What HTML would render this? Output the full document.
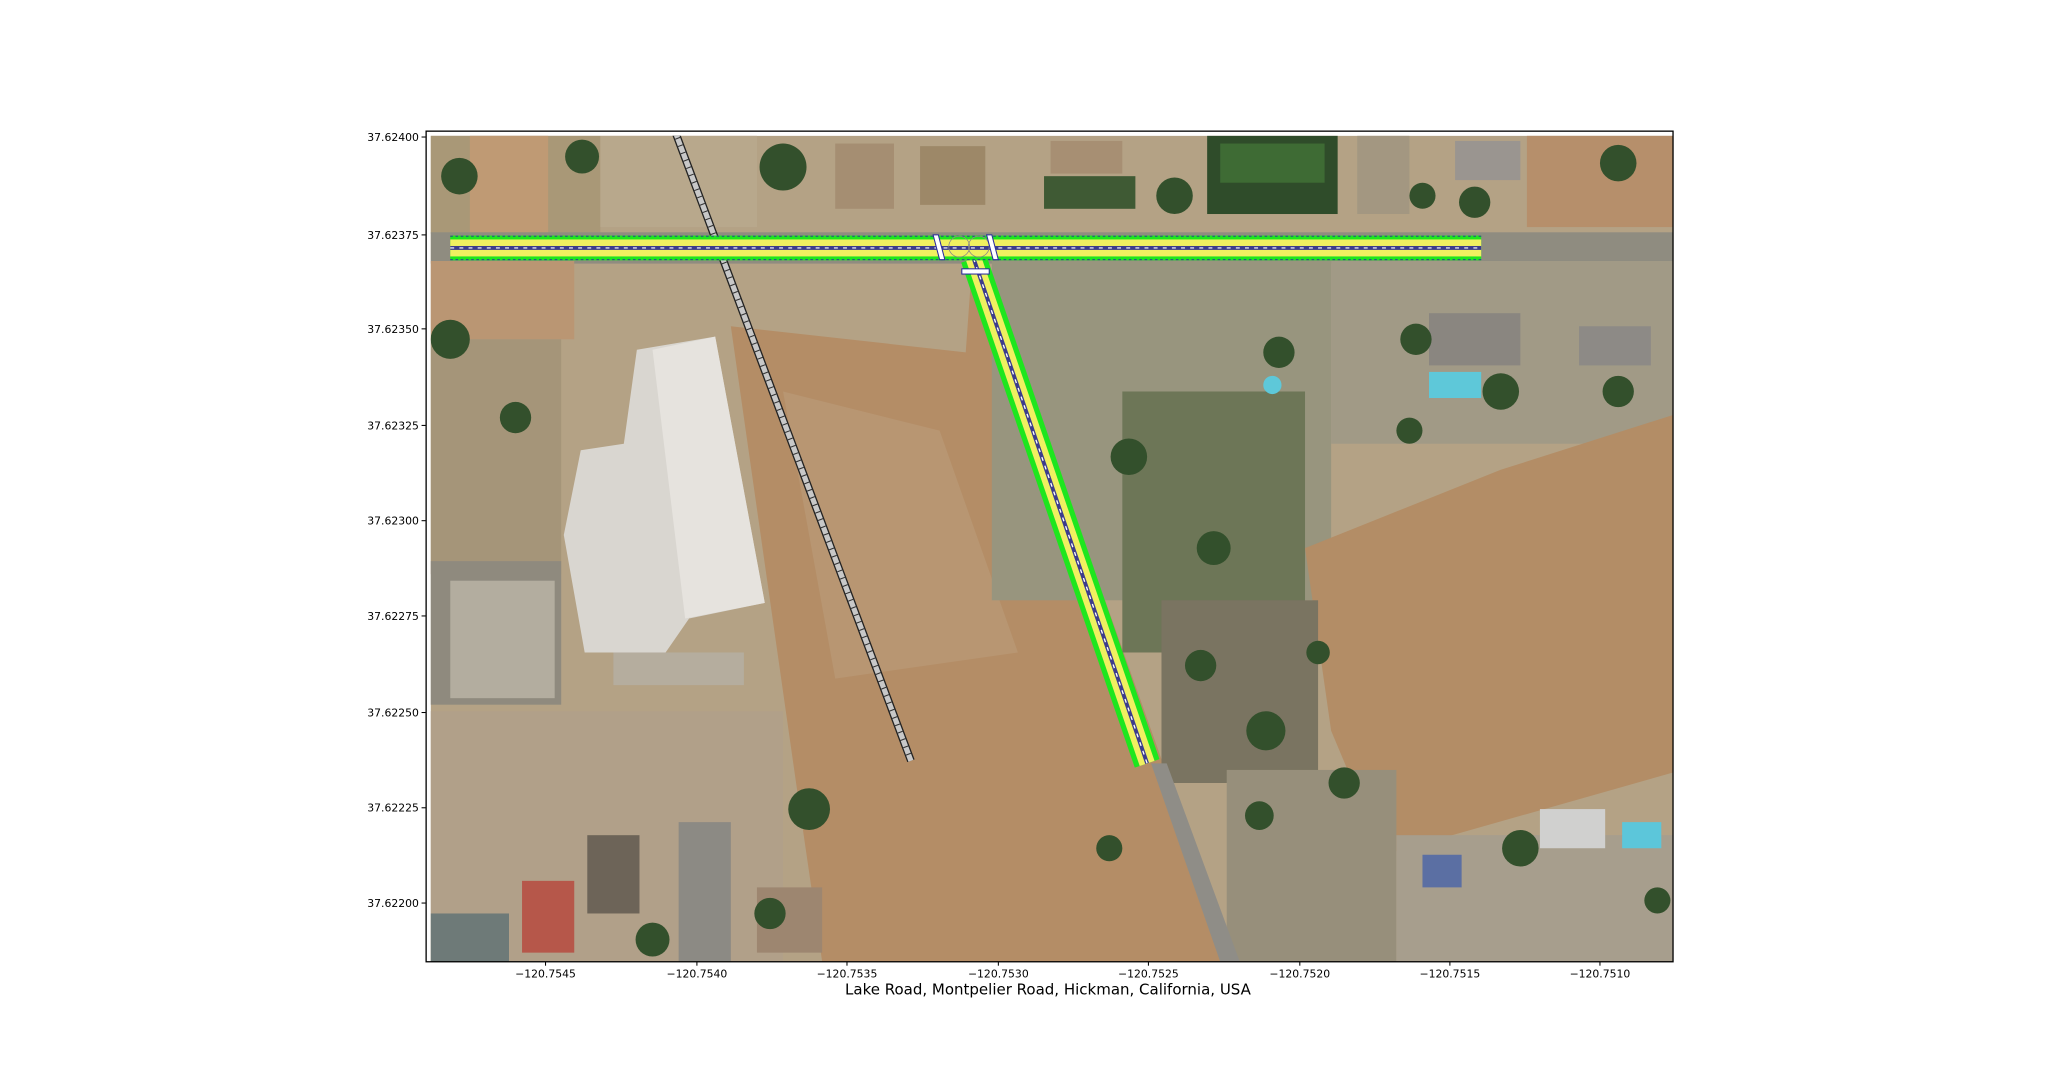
<!DOCTYPE html>
<html><head><meta charset="utf-8"><style>
html,body{margin:0;padding:0;background:#fff;}
svg{display:block;}
text{font-family:"DejaVu Sans","Liberation Sans",sans-serif;fill:#000;}
</style></head><body>
<svg width="2045" height="1080" viewBox="0 0 1567 827.6" xmlns="http://www.w3.org/2000/svg">
<defs>
<clipPath id="c"><rect x="330" y="104" width="952" height="633"/></clipPath>
<pattern id="rail" width="6" height="6" patternUnits="userSpaceOnUse"><rect width="6" height="6" fill="#bbb"/></pattern>
</defs>
<rect width="1567" height="828" fill="#fff"/>
<g clip-path="url(#c)">
<rect x="330" y="104" width="952" height="633" fill="#b4a285"/>
<!-- top-left area -->
<rect x="330" y="104" width="130" height="75" fill="#a99877"/>
<rect x="360" y="104" width="60" height="75" fill="#bf9a74"/>
<rect x="460" y="104" width="120" height="70" fill="#b8a88c"/>
<!-- road band -->
<rect x="330" y="178" width="952" height="24" fill="#8f8c80"/>
<!-- houses top -->
<rect x="640" y="110" width="45" height="50" fill="#a58e72"/>
<rect x="705" y="112" width="50" height="45" fill="#9d8868"/>
<rect x="805" y="108" width="55" height="25" fill="#a78f73"/>
<rect x="800" y="135" width="70" height="25" fill="#3f5a34"/>
<rect x="925" y="104" width="100" height="60" fill="#2f4c2a"/>
<rect x="935" y="110" width="80" height="30" fill="#3e6b34"/>
<rect x="1040" y="104" width="40" height="60" fill="#a39781"/>
<rect x="1115" y="108" width="50" height="30" fill="#9a9590"/>
<rect x="1170" y="104" width="112" height="70" fill="#b68f6b"/>
<!-- left-side lots -->
<rect x="330" y="200" width="110" height="60" fill="#ba9673"/>
<rect x="330" y="260" width="100" height="180" fill="#a59579"/>
<rect x="330" y="430" width="100" height="110" fill="#8f8a7e"/>
<rect x="345" y="445" width="80" height="90" fill="#b3ad9f"/>
<rect x="330" y="545" width="270" height="192" fill="#b1a089"/>
<!-- big white building -->
<polygon points="488,268 548,258 586,462 528,474 510,500 448,500 432,410 445,345 478,340" fill="#d9d6d0"/>
<polygon points="500,268 548,258 586,462 525,474" fill="#e6e3de"/>
<rect x="470" y="500" width="100" height="25" fill="#b5ad9e"/>
<!-- central field -->
<polygon points="560,250 740,270 745,200 745,200 760,215 945,737 630,737 610,600" fill="#b48d66"/>
<polygon points="600,300 720,330 780,500 640,520" fill="#b89672"/>
<!-- right area -->
<rect x="760" y="200" width="260" height="260" fill="#98957e"/>
<rect x="860" y="300" width="140" height="200" fill="#6d7657"/>
<rect x="1020" y="200" width="262" height="140" fill="#a19a86"/>
<rect x="1095" y="240" width="70" height="40" fill="#8a8680"/>
<rect x="1210" y="250" width="55" height="30" fill="#8d8a86"/>
<rect x="1095" y="285" width="40" height="20" fill="#5ec8d9"/>
<polygon points="1000,420 1150,360 1282,318 1282,592 1060,655 1020,560" fill="#b38d66"/>
<rect x="890" y="460" width="120" height="140" fill="#7a7461"/>
<rect x="940" y="590" width="130" height="147" fill="#978f7b"/>
<rect x="1070" y="640" width="212" height="97" fill="#a79e8d"/>
<rect x="1180" y="620" width="50" height="30" fill="#d0d0cf"/>
<rect x="1243" y="630" width="30" height="20" fill="#5cc6da"/>
<rect x="1090" y="655" width="30" height="25" fill="#5b6fa3"/>
<!-- bottom-left houses -->
<rect x="400" y="675" width="40" height="55" fill="#b6574a"/>
<rect x="330" y="700" width="60" height="37" fill="#6e7a78"/>
<rect x="450" y="640" width="40" height="60" fill="#6d6458"/>
<rect x="520" y="630" width="40" height="107" fill="#8c8a84"/>
<rect x="580" y="680" width="50" height="50" fill="#9d8670"/>
<!-- lower road on right -->
<polygon points="882,585 894,585 950,737 935,737" fill="#8f8d87"/>
<!-- trees -->
<g fill="#33502c">
<circle cx="352" cy="135" r="14"/><circle cx="446" cy="120" r="13"/><circle cx="600" cy="128" r="18"/>
<circle cx="345" cy="260" r="15"/><circle cx="395" cy="320" r="12"/><circle cx="900" cy="150" r="14"/>
<circle cx="1130" cy="155" r="12"/><circle cx="1240" cy="125" r="14"/><circle cx="1090" cy="150" r="10"/>
<circle cx="865" cy="350" r="14"/><circle cx="930" cy="420" r="13"/><circle cx="970" cy="560" r="15"/>
<circle cx="1165" cy="650" r="14"/><circle cx="1030" cy="600" r="12"/><circle cx="965" cy="625" r="11"/>
<circle cx="620" cy="620" r="16"/><circle cx="590" cy="700" r="12"/><circle cx="500" cy="720" r="13"/>
<circle cx="1150" cy="300" r="14"/><circle cx="1085" cy="260" r="12"/><circle cx="1240" cy="300" r="12"/>
<circle cx="980" cy="270" r="12"/><circle cx="920" cy="510" r="12"/><circle cx="1080" cy="330" r="10"/>
<circle cx="850" cy="650" r="10"/><circle cx="1270" cy="690" r="10"/><circle cx="1010" cy="500" r="9"/>
</g>
<circle cx="975" cy="295" r="7" fill="#5ec8d9"/>
<!-- railroad -->
<line x1="517" y1="100" x2="698" y2="583" stroke="#222" stroke-width="6"/>
<line x1="517" y1="100" x2="698" y2="583" stroke="#c8c8c8" stroke-width="4"/>
<line x1="517" y1="100" x2="698" y2="583" stroke="#333" stroke-width="4" stroke-dasharray="0.8 5.2"/>
<!-- diagonal road -->
<line x1="746" y1="198" x2="879" y2="585" stroke="#1ee61e" stroke-width="20"/>
<line x1="746" y1="198" x2="879" y2="585" stroke="#f0f060" stroke-width="12"/>
<line x1="746" y1="198" x2="879" y2="585" stroke="#3c3c8c" stroke-width="3"/>
<line x1="746" y1="198" x2="879" y2="585" stroke="#fff" stroke-width="1" stroke-dasharray="3 4"/>
<!-- horizontal road -->
<rect x="345" y="180.5" width="790" height="19" fill="#1ee61e"/>
<rect x="345" y="183.5" width="790" height="13" fill="#f0f060"/>
<rect x="345" y="188.5" width="790" height="3" fill="#3c3c8c"/>
<line x1="345" y1="190" x2="1135" y2="190" stroke="#fff" stroke-width="0.8" stroke-dasharray="3 4"/>
<line x1="345" y1="181" x2="1135" y2="181" stroke="#2a2aa0" stroke-width="0.6" stroke-dasharray="2 2"/>
<line x1="345" y1="199" x2="1135" y2="199" stroke="#2a2aa0" stroke-width="0.6" stroke-dasharray="2 2"/>
<!-- intersection -->
<circle cx="735" cy="189" r="8" fill="none" stroke="#888" stroke-width="0.6"/>
<circle cx="750" cy="189" r="8" fill="none" stroke="#888" stroke-width="0.6"/>
<!-- crosswalks -->
<polygon points="715,180 719,180 724,199 720,199" fill="#fff" stroke="#2a2aa0" stroke-width="0.8"/>
<polygon points="756,180 760,180 765,199 761,199" fill="#fff" stroke="#2a2aa0" stroke-width="0.8"/>
<rect x="737" y="206" width="21" height="4" fill="#fff" stroke="#2a2aa0" stroke-width="0.8"/>
</g>
<!-- frame -->
<rect x="326.5" y="100.5" width="955.5" height="636.5" fill="none" stroke="#000" stroke-width="1"/>
<!-- y ticks -->
<g stroke="#000" stroke-width="0.8">
<line x1="323" y1="105" x2="326" y2="105"/><line x1="323" y1="180" x2="326" y2="180"/>
<line x1="323" y1="252" x2="326" y2="252"/><line x1="323" y1="326" x2="326" y2="326"/>
<line x1="323" y1="399" x2="326" y2="399"/><line x1="323" y1="472" x2="326" y2="472"/>
<line x1="323" y1="546" x2="326" y2="546"/><line x1="323" y1="619" x2="326" y2="619"/>
<line x1="323" y1="692" x2="326" y2="692"/>
<line x1="418" y1="737" x2="418" y2="740"/><line x1="534" y1="737" x2="534" y2="740"/>
<line x1="649" y1="737" x2="649" y2="740"/><line x1="765" y1="737" x2="765" y2="740"/>
<line x1="880" y1="737" x2="880" y2="740"/><line x1="996" y1="737" x2="996" y2="740"/>
<line x1="1111" y1="737" x2="1111" y2="740"/><line x1="1226" y1="737" x2="1226" y2="740"/>
</g>
<g font-size="8.3" text-anchor="end">
<text x="321" y="108">37.62400</text><text x="321" y="183">37.62375</text>
<text x="321" y="255">37.62350</text><text x="321" y="329">37.62325</text>
<text x="321" y="402">37.62300</text><text x="321" y="475">37.62275</text>
<text x="321" y="549">37.62250</text><text x="321" y="622">37.62225</text>
<text x="321" y="695">37.62200</text>
</g>
<g font-size="8.3" text-anchor="middle">
<text x="418" y="749">−120.7545</text><text x="534" y="749">−120.7540</text>
<text x="649" y="749">−120.7535</text><text x="765" y="749">−120.7530</text>
<text x="880" y="749">−120.7525</text><text x="996" y="749">−120.7520</text>
<text x="1111" y="749">−120.7515</text><text x="1226" y="749">−120.7510</text>
</g>
<text x="803" y="762" font-size="11.5" text-anchor="middle">Lake Road, Montpelier Road, Hickman, California, USA</text>
</svg>
</body></html>
